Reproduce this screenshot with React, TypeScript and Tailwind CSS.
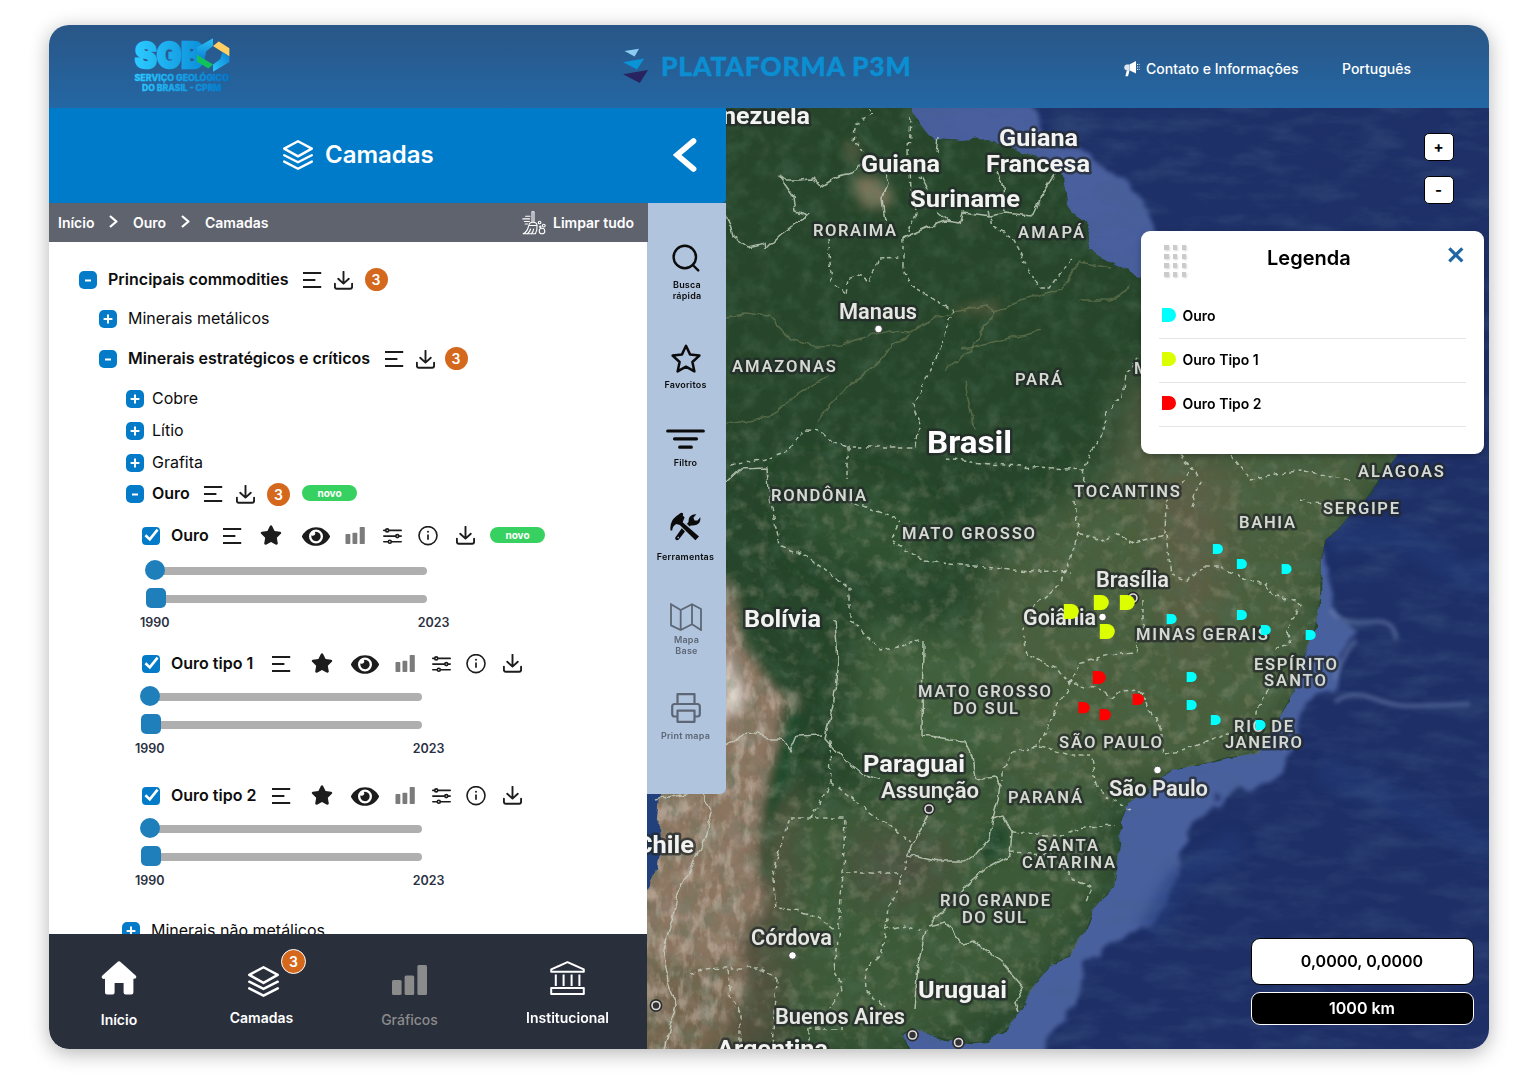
import React from "react";
import { FaEye, FaStar } from "react-icons/fa";

/* ---------- icons ---------- */

const LayersIcon = ({ className = "" }: { className?: string }) => (
  <svg viewBox="0 0 30 30" className={className} fill="none" stroke="currentColor" strokeWidth="2.4" strokeLinejoin="round" strokeLinecap="round">
    <path d="M15 1.2 28.8 8.6 15 16.4 1.2 8.6z" />
    <path d="M1.2 15.2 15 22.2 28.8 15.2" />
    <path d="M1.2 21.6 15 28.7 28.8 21.6" />
  </svg>
);

const MenuIcon = () => (
  <svg viewBox="0 0 19 17" className="h-[17px] w-[19px] shrink-0" stroke="#1c1c1c" strokeWidth="2">
    <path d="M0 1.1H18.2M0 8.1H12.4M0 15.1H18.2" />
  </svg>
);

const DownloadIcon = () => (
  <svg viewBox="0 0 19 19" className="h-[19px] w-[19px] shrink-0" fill="none" stroke="#1c1c1c" strokeWidth="1.9" strokeLinecap="round" strokeLinejoin="round">
    <path d="M9.5 .8V12.4M4.2 7.8 9.5 12.6 14.8 7.8" />
    <path d="M.9 12.6V15.8Q.9 17.8 2.8 17.8H16.2Q18.1 17.8 18.1 15.8V12.6" />
  </svg>
);

const BarsIcon = ({ className = "" }: { className?: string }) => (
  <svg viewBox="0 0 35 30" className={className} fill="currentColor">
    <rect x="0" y="15" width="9.6" height="15" rx="1.5" />
    <rect x="12.6" y="10.5" width="9.6" height="19.5" rx="1.5" />
    <rect x="25.4" y="0" width="9.6" height="30" rx="1.5" />
  </svg>
);

const SmallBars = ({ className = "" }: { className?: string }) => (
  <svg viewBox="0 0 20 17" className={className} fill="#7b7b7b">
    <rect x="0.5" y="7" width="4.8" height="10" rx=".7" />
    <rect x="7.5" y="5.8" width="4.8" height="11.2" rx=".7" />
    <rect x="14.7" y="0" width="5.1" height="17" rx=".7" />
  </svg>
);

const SlidersIcon = () => (
  <svg viewBox="0 0 19 17" className="h-[17px] w-[19px] shrink-0" fill="none" stroke="#1c1c1c" strokeWidth="1.6" strokeLinecap="round">
    <path d="M.8 2.4H2.6M6 2.4H18.2M.8 8.1H12.6M16 8.1H18.2M.8 13.8H5M8.6 13.8H18.2" />
    <circle cx="4.2" cy="2.4" r="1.5" />
    <circle cx="14.3" cy="8.1" r="1.5" />
    <circle cx="6.8" cy="13.8" r="1.5" />
  </svg>
);

const InfoIcon = () => (
  <svg viewBox="0 0 20 20" className="h-5 w-5 shrink-0" fill="none" stroke="#1c1c1c" strokeWidth="1.6">
    <circle cx="10" cy="9.6" r="9" />
    <path d="M10 8.4V13.8" strokeWidth="1.7" />
    <circle cx="10" cy="5.8" r="1" fill="#1c1c1c" stroke="none" />
  </svg>
);

const Crumb = () => (
  <svg viewBox="0 0 9 13" className="h-[13px] w-[9px] -translate-y-px" fill="none" stroke="#fff" strokeWidth="2.3" strokeLinejoin="round">
    <path d="M1 1 7.4 6.5 1 12" />
  </svg>
);

const BroomIcon = () => (
  <svg viewBox="0 0 24 24" className="h-6 w-6" fill="none" stroke="#fff" strokeWidth="1.1" strokeLinecap="round" strokeLinejoin="round">
    <path d="M10 .8V11M12 .8V11M10 .8H12" />
    <path d="M7 14.5Q7 11.3 11 11.3T15 14.5zM6.6 14.8Q5.6 20.5 1.2 22.8H13.4Q15.4 19 15 14.8" />
    <path d="M5.5 22.6Q8 20.5 8.6 18M9.6 22.6Q11.3 20.6 11.6 18" />
    <path d="M3.6 5.3H8M.8 7.9H7.6M2.4 10.5H7.4M3.2 13H5.6" />
    <circle cx="20" cy="20" r="2.8" />
    <circle cx="17.6" cy="11.5" r="1.3" />
    <circle cx="21.8" cy="14.6" r="1.4" />
    <circle cx="18.3" cy="15.8" r=".7" />
  </svg>
);

const Megaphone = () => (
  <svg viewBox="0 0 16 16" className="h-4 w-4" fill="#fff">
    <path d="M5.4 3.6 12 0V12.4L5.4 9.2z" />
    <path d="M2.4 3.6H5V9.2H2.4Q.2 8.8.2 6.4T2.4 3.6z" opacity=".85" />
    <path d="M2.8 9.2H5.6L4 15.2H1.4z" />
    <path d="M13 3.4H14M13 6H14M13 8.4H14M14.8 3.4H15.6M14.8 6H15.6M14.8 8.4H15.6" stroke="#fff" strokeWidth="1" />
  </svg>
);

const SearchIcon = () => (
  <svg viewBox="0 0 28 28" className="h-7 w-7" fill="none" stroke="#0b0b0b" strokeWidth="2.4" strokeLinecap="round">
    <circle cx="12.8" cy="13" r="11.2" />
    <path d="M20.8 21 26.2 26.4" />
  </svg>
);

const StarOutline = () => (
  <svg viewBox="0 0 30 29" className="h-[29px] w-[30px]" fill="none" stroke="#0b0b0b" strokeWidth="2.5" strokeLinejoin="round">
    <path d="M15 1.8 19 10.4 28.4 11.6 21.4 18 23.4 27.4 15 22.7 6.6 27.4 8.6 18 1.6 11.6 11 10.4z" />
  </svg>
);

const FilterIcon = () => (
  <svg viewBox="0 0 39 20" className="h-5 w-[39px]" stroke="#0b0b0b" strokeWidth="3.2" strokeLinecap="round">
    <path d="M1.7 2H37.3M8.5 9.8H30.5M13.7 18.2H25.3" />
  </svg>
);

const ToolsIcon = () => (
  <svg viewBox="0 0 31 29" className="h-[29px] w-[31px]" fill="#0b0b0b">
    <path d="M.6 18.5Q-.8 9.6 6.2 4.2L10.6 1Q12.4.2 13.2 1.8L12.8 3.6 14.6 5.4 12.6 10.2 29 24.6 25.4 28.2 9.8 13 6.2 12Q2.6 14 2.2 18.4z" />
    <path d="M16.6 11.4Q17.8 12 18.6 9.4 18.2 4 23.4 2.4L26.4 2.2 23.4 5.8 24.6 8.4 27.6 8.6 30.2 5.2Q31.2 10.6 26.6 12.8 23.4 14 20.8 13.4L19.6 14.4z" />
    <path d="M11.8 16.2 15 19.4 8.8 27.4Q6.8 29 5.4 27.2 4.6 25.6 6 24.4zM8.2 24.6 7.2 25.6 8.2 26.6 9.2 25.6z" />
  </svg>
);

const MapIcon = () => (
  <svg viewBox="0 0 32 28" className="h-7 w-8" fill="none" stroke="#5d6674" strokeWidth="1.8">
    <path d="M1 1.2 10.7 7 22 1.2 31 6V27L22 21.2 10.7 27 1 22.4zM10.7 7V27M22 1.2V21.2" />
  </svg>
);

const PrintIcon = () => (
  <svg viewBox="0 0 30 30" className="h-[30px] w-[30px]" fill="none" stroke="#5d6674" strokeWidth="2.2" strokeLinejoin="round">
    <path d="M6.5 11V1.2H23.5V11M6.5 23.5H3.6Q1.2 23.5 1.2 21V13.5Q1.2 11 3.8 11H26.2Q28.8 11 28.8 13.5V21Q28.8 23.5 26.4 23.5H23.5" />
    <path d="M6.5 17.6H23.5V28.8H6.5z" />
  </svg>
);

const HomeIcon = () => (
  <svg viewBox="0 0 36 34" className="h-[34px] w-9" fill="#fff">
    <path d="M16.2 1.2Q18 -.6 19.8 1.2L34.6 14.4Q35.8 15.8 35 17 34.4 18 32.4 17.8V31.4Q32.4 33.4 30.4 33.4H24.6Q22.6 33.4 22.6 31.4V22H13.6V31.4Q13.6 33.4 11.6 33.4H6Q4 33.4 4 31.4V17.8Q1.8 18.2 1 17 .2 15.8 1.4 14.4z" />
  </svg>
);

const BankIcon = () => (
  <svg viewBox="0 0 35 34" className="h-[34px] w-[35px]" fill="none" stroke="#fff" strokeWidth="2" strokeLinejoin="round">
    <path d="M17.5 1.2 33.8 8.4V10.8H1.2V8.4z" />
    <path d="M5.8 13.5V25M13.6 13.5V25M21.6 13.5V25M29.4 13.5V25" />
    <path d="M1.2 27H33.8V33H1.2z" />
  </svg>
);

const SgbLogo = () => (
  <svg viewBox="132 36 100 58" className="h-[58px] w-[100px] overflow-visible">
    <defs>
      <linearGradient id="sgbText" gradientUnits="userSpaceOnUse" x1="134" y1="0" x2="229" y2="0">
        <stop offset="0" stopColor="#2ccbff" />
        <stop offset="1" stopColor="#0078cc" />
      </linearGradient>
      <linearGradient id="hexBlue" x1="0" y1="0" x2="0" y2="1">
        <stop offset="0" stopColor="#2bc2f8" />
        <stop offset="1" stopColor="#0a80d2" />
      </linearGradient>
      <linearGradient id="hexBlueUp" x1="1" y1="0" x2="0" y2="1">
        <stop offset="0" stopColor="#0a7fd1" />
        <stop offset="1" stopColor="#2bc8fc" />
      </linearGradient>
    </defs>
    <text x="135" y="67.8" textLength="68" lengthAdjust="spacingAndGlyphs" fontFamily="Inter" fontWeight="900" fontSize="35.5" fill="url(#sgbText)" stroke="url(#sgbText)" strokeWidth="2.4">SGB</text>
    <path d="M213 38.2V46L206 51.6 204.6 59.6 197 54.8V47.6z" fill="url(#hexBlue)" />
    <path d="M218.8 41.6 229.4 48.2V56.6L213 46z" fill="#ffcf63" />
    <path d="M229.4 56.6V62L213 71.8V64.4L220.4 59 222.4 52z" fill="url(#hexBlueUp)" />
    <path d="M197 54.8 213 64.4 208.4 68.4 197 61.8z" fill="#12c05c" />
    <g fontFamily="Inter" fontWeight="800" fill="url(#sgbText)" stroke="url(#sgbText)" strokeWidth=".3">
      <text x="134.5" y="81.3" fontSize="8.6" textLength="94.5" lengthAdjust="spacingAndGlyphs">SERVIÇO GEOLÓGICO</text>
      <text x="142" y="90.7" fontSize="8.6" textLength="79.5" lengthAdjust="spacingAndGlyphs">DO BRASIL - CPRM</text>
    </g>
  </svg>
);

/* ---------- small building blocks ---------- */

const Toggle = ({ open = false }: { open?: boolean }) => (
  <span className="flex h-[18px] w-[18px] shrink-0 items-center justify-center rounded-[5px] bg-[#047bc8]">
    <svg viewBox="0 0 10 10" className="h-2.5 w-2.5" stroke="#fff" strokeWidth="2">
      {open ? <path d="M2 5.5H8" /> : <path d="M.6 5H9.4M5 .6V9.4" />}
    </svg>
  </span>
);

const Check = () => (
  <span className="flex h-[18px] w-[18px] shrink-0 items-center justify-center rounded-[4px] bg-[#047bc8]">
    <svg viewBox="0 0 18 18" className="h-[18px] w-[18px]" fill="none" stroke="#fff" strokeWidth="2.6">
      <path d="M3.4 8.2 7.8 12.4 15.6 2.6" />
    </svg>
  </span>
);

const Count = () => (
  <span className="flex h-[23px] w-[23px] shrink-0 items-center justify-center rounded-full bg-[#d4691e] text-[14px] font-semibold text-white">3</span>
);

const Novo = () => (
  <span className="mb-0.5 flex h-4 w-[55px] shrink-0 items-center justify-center rounded-full bg-[#36d160] text-[10px] font-bold text-white">novo</span>
);

const TreeRow = ({ pos, open, label, width, children }: { pos: string; open?: boolean; label: string; width: string; children?: React.ReactNode }) => (
  <div className={`flex h-6 shrink-0 items-center ${pos}`}>
    <Toggle open={open} />
    <span className={`shrink-0 whitespace-nowrap pb-0.5 text-[16px] leading-6 text-[#0d0d0d] ${open ? "font-semibold" : "font-normal"} ${width}`}>{label}</span>
    {children}
  </div>
);

const LayerRow = ({ pos, label, width, gaps, novo }: { pos: string; label: string; width: string; gaps: string[]; novo?: boolean }) => (
  <div className={`ml-[93px] flex h-6 shrink-0 items-center ${pos}`}>
    <Check />
    <span className={`ml-[11px] shrink-0 whitespace-nowrap pb-0.5 text-[16px] font-semibold leading-6 text-[#0d0d0d] ${width}`}>{label}</span>
    <MenuIcon />
    <FaStar className={`mb-0.5 h-5 w-[22px] shrink-0 text-[#1c1c1c] ${gaps[0]}`} />
    <FaEye className={`mt-px h-[25px] w-7 shrink-0 text-[#1c1c1c] ${gaps[1]}`} />
    <SmallBars className={`mb-px h-[17px] w-5 shrink-0 ${gaps[2]}`} />
    <span className={gaps[3]}><SlidersIcon /></span>
    <span className={gaps[4]}><InfoIcon /></span>
    <span className={`mb-px ${gaps[5]}`}><DownloadIcon /></span>
    {novo && <span className="ml-[15px]"><Novo /></span>}
  </div>
);

const Range = ({ pos }: { pos: string }) => (
  <div className={`shrink-0 ${pos}`}>
    <div className="flex h-5 items-center">
      <span className="z-10 h-5 w-5 rounded-full bg-[#1f7fbb]" />
      <span className="-ml-2 mt-px h-2 w-[270px] rounded-full bg-[#afafaf]" />
    </div>
    <div className="mt-2 flex h-5 items-center">
      <span className="z-10 ml-px h-5 w-5 rounded-[5px] bg-[#1f7fbb]" />
      <span className="-ml-2 mt-px h-2 w-[269px] rounded-full bg-[#afafaf]" />
    </div>
    <div className="-ml-[5px] mt-[7px] flex h-4 w-[309.5px] items-center justify-between text-[12.5px] font-semibold leading-4 text-[#2b3042]">
      <span>1990</span>
      <span>2023</span>
    </div>
  </div>
);

const RailItem = ({ pos, icon, label, muted }: { pos: string; icon: React.ReactNode; label: React.ReactNode; muted?: boolean }) => (
  <div className={`flex w-full flex-col items-center ${pos}`}>
    <div className="pr-0.5">{icon}</div>
    <span className={`text-center text-[9px] font-semibold leading-[11px] tracking-[0.22px] ${muted ? "text-[#5d6674]" : "text-[#0b0b0b]"}`}>{label}</span>
  </div>
);

/* ---------- satellite map ---------- */

const LAND =
  "M640 100H908L914 114 924 130 936 139 962 141 985 139 1003 145 1030 154 1053 165 1063 178 1068 205 1078 216 1087 223 1091 235 1088 248 1100 256 1120 268 1142 277 1200 290 1290 320 1370 370 1405 410 1397 456 1385 470 1365 500 1350 515 1337 530 1325 540 1321 560 1320 600 1314 632 1302 660 1294 690 1280 716 1268 738 1258 754 1228 757 1202 764 1172 770 1158 780 1146 792 1128 803 1121 820 1120 845 1117 868 1114 886 1094 908 1086 930 1070 955 1050 966 1036 983 1022 1008 1006 1030 988 1041 962 1043 935 1036 912 1028 902 1034 908 1049 910 1060H640z";

const ANDES = "M700 560 735 590 742 640 775 690 800 700 780 740 762 800 756 870 768 905 740 935 748 990 700 1060H640V560z";

const SOLID_BORDERS = [
  "M726 214 733 236 748 247 765 243 766 249 780 235 795 224 809 215 795 211 793 196 779 176 784 180 800 180 812 179 820 187 834 178 850 173 862 164",
  "M880 165 888 182 883 198 886 222M938 139 936 152M920 175 928 190M938 212 950 222M1055 175 1041 197 1036 210 1030 216 1005 213 990 216 963 212 960 223 945 221 928 227 903 238",
  "M997 172 1003 186 1005 212M726 482 740 469 767 468 770 500",
  "M835 620 838 660 834 700 825 738 845 760 865 775 882 780M726 745 750 732 772 738 782 738 790 752 797 736 822 735",
  "M923 640 922 736 950 740 965 741 972 755 975 780 995 777 1000 785 998 800 993 818 990 838 975 855 965 862 940 862 907 855 918 835 928 815",
  "M993 818 1003 815 1012 832 1010 855 987 868 966 886 945 910 928 926 945 922 963 945 975 942 1005 965 1023 986 1015 1002 1018 1012",
  "M926 930 918 965 914 1010",
  "M655 800 700 790 712 812 704 840 690 870 678 894 672 920 663 950 668 980 676 1005 664 1049",
];

const DASHED_BORDERS = [
  "M868 108 873 115 856 124 853 140 862 152M911 118 909 150 911 190 916 214 908 232",
  "M827 238 830 262 832 282 846 294 848 278 858 275 870 281 878 258 902 257M903 238 903 268 912 286 935 300 953 310 945 335 935 360 922 388 913 405 919 420 915 447 847 447 847 480",
  "M730 465 762 460 790 450 805 430 820 431 832 442 847 447M988 211 992 225 1014 240 1022 255 1028 270 1041 288 1050 288 1065 268 1072 258",
  "M945 459 990 464 1084 470 1091 450 1103 435 1107 412 1122 396 1125 375 1138 360",
  "M847 500 900 520 890 540 925 560 1010 570 1070 572",
  "M770 500 780 545 812 560 850 590 850 620 880 650 920 640",
  "M1075 500 1078 532 1070 562 1055 588 1035 605 1023 630 1027 655 1058 668 1070 684 1055 710 1040 744",
  "M1084 470 1080 500M1078 532 1100 541 1115 534 1135 544 1165 535 1166 502 1190 470",
  "M1166 535 1171 575 1186 580 1205 566 1220 566 1245 580 1265 585 1272 596 1293 600 1300 605 1287 632 1290 645 1275 650",
  "M1143 600 1143 624 1135 652 1118 653 1098 658 1080 664 1070 684 1103 690 1111 698 1118 692 1142 691 1150 712 1160 726 1163 754 1185 750 1222 736 1256 722 1258 705 1270 690",
  "M1038 746 1012 752 1003 768 1003 780M1040 746 1070 755 1090 755 1097 785 1110 800 1130 810M1012 832 1060 836 1085 827 1115 825",
  "M1010 853 1050 855 1075 880 1092 888 1085 904M830 740 831 783 810 818M831 783 870 812 910 842",
  "M778 855 790 818 845 818 843 873 837 950 835 970 842 990 830 1008M845 873 900 873M906 858 897 895 888 905 886 930 880 955 865 970 866 990 885 1008M886 930 905 925 922 930",
  "M778 855 773 880 776 908 800 911 822 920 835 930M690 972 720 968 760 968 776 978 772 1049M727 970 732 1000 740 1012 740 1049M808 1029H842M808 1029V1049",
  "M1180 455 1200 480 1190 510M1230 455 1250 480 1300 470 1350 480M1300 500 1350 510",
];

const RIVERS = [
  "M726 316 745 313 768 316 790 338 815 346 842 345 870 335 890 331 913 332 930 320 955 312 985 306 995 312 1020 300 1060 290 1080 262 1110 268",
  "M817 422 830 405 850 385 880 362 892 345 910 334M726 424 770 418 800 392 830 375M995 312 970 350 945 370",
  "M975 430 968 400 965 380M1042 330 1000 340 960 350M1080 300 1110 300 1130 288",
];

type Kind = "country" | "big" | "city" | "state";
type Label = { t: string; x: number; y: number; w: number; k: Kind };

const LABELS: Label[] = [
  { t: "nezuela", x: 722, y: 124, w: 88, k: "country" },
  { t: "Guiana", x: 861, y: 171.5, w: 79, k: "country" },
  { t: "Guiana", x: 999, y: 145.5, w: 79, k: "country" },
  { t: "Francesa", x: 986, y: 171.5, w: 104, k: "country" },
  { t: "Suriname", x: 910, y: 206.5, w: 110, k: "country" },
  { t: "RORAIMA", x: 813, y: 236, w: 83, k: "state" },
  { t: "AMAPÁ", x: 1018, y: 238, w: 66, k: "state" },
  { t: "Manaus", x: 839, y: 319, w: 78, k: "city" },
  { t: "AMAZONAS", x: 732, y: 372, w: 104, k: "state" },
  { t: "PARÁ", x: 1015, y: 385, w: 47, k: "state" },
  { t: "M", x: 1134, y: 374, w: 14, k: "state" },
  { t: "Brasil", x: 927, y: 452.5, w: 85, k: "big" },
  { t: "RONDÔNIA", x: 771, y: 501, w: 95, k: "state" },
  { t: "TOCANTINS", x: 1074, y: 497, w: 106, k: "state" },
  { t: "ALAGOAS", x: 1358, y: 477, w: 86, k: "state" },
  { t: "SERGIPE", x: 1323, y: 513.5, w: 76, k: "state" },
  { t: "BAHIA", x: 1239, y: 528, w: 56, k: "state" },
  { t: "MATO GROSSO", x: 902, y: 539, w: 133, k: "state" },
  { t: "Brasília", x: 1096, y: 587, w: 73, k: "city" },
  { t: "Goiânia", x: 1023, y: 625, w: 73, k: "city" },
  { t: "Bolívia", x: 744, y: 627, w: 77, k: "country" },
  { t: "MINAS GERAIS", x: 1136, y: 640, w: 132, k: "state" },
  { t: "ESPÍRITO", x: 1254, y: 669.5, w: 83, k: "state" },
  { t: "SANTO", x: 1264, y: 686, w: 62, k: "state" },
  { t: "MATO GROSSO", x: 918, y: 697, w: 133, k: "state" },
  { t: "DO SUL", x: 953, y: 713.5, w: 65, k: "state" },
  { t: "RIO DE", x: 1234, y: 732, w: 59, k: "state" },
  { t: "JANEIRO", x: 1225, y: 748, w: 77, k: "state" },
  { t: "SÃO PAULO", x: 1059, y: 748, w: 103, k: "state" },
  { t: "Paraguai", x: 863, y: 771.5, w: 102, k: "country" },
  { t: "Assunção", x: 881, y: 798, w: 98, k: "city" },
  { t: "PARANÁ", x: 1008, y: 803, w: 74, k: "state" },
  { t: "São Paulo", x: 1109, y: 796, w: 99, k: "city" },
  { t: "Chile", x: 636, y: 852.5, w: 58, k: "country" },
  { t: "SANTA", x: 1037, y: 851, w: 61, k: "state" },
  { t: "CATARINA", x: 1022, y: 867.5, w: 93, k: "state" },
  { t: "RIO GRANDE", x: 940, y: 906, w: 110, k: "state" },
  { t: "DO SUL", x: 962, y: 922.5, w: 64, k: "state" },
  { t: "Córdova", x: 751, y: 945, w: 81, k: "city" },
  { t: "Uruguai", x: 918, y: 998, w: 89, k: "country" },
  { t: "Buenos Aires", x: 775, y: 1023.5, w: 130, k: "city" },
  { t: "Argentina", x: 717, y: 1057, w: 111, k: "country" },
];

const FONT: Record<Kind, { size: number; weight: number; fill: string; adjust: "spacing" | "spacingAndGlyphs" }> = {
  country: { size: 24.5, weight: 700, fill: "#f3f3f1", adjust: "spacingAndGlyphs" },
  big: { size: 32, weight: 700, fill: "#ffffff", adjust: "spacingAndGlyphs" },
  city: { size: 21.5, weight: 600, fill: "#e6e6e2", adjust: "spacingAndGlyphs" },
  state: { size: 16.6, weight: 600, fill: "#d6d9d2", adjust: "spacing" },
};

const MARKERS: [number, number, number, string][] = [
  [1212.9, 544, 10, "#00ffff"],
  [1236.9, 559, 10, "#00ffff"],
  [1281.6, 564, 10, "#00ffff"],
  [1166.7, 614, 10, "#00ffff"],
  [1236.9, 610, 10, "#00ffff"],
  [1260.8, 625, 10, "#00ffff"],
  [1305.7, 630, 10, "#00ffff"],
  [1186.7, 672, 10, "#00ffff"],
  [1186.7, 700, 10, "#00ffff"],
  [1210.8, 715, 10, "#00ffff"],
  [1255.6, 720, 10, "#00ffff"],
  [1063.8, 604, 15, "#dcff00"],
  [1093.8, 595, 15, "#dcff00"],
  [1119.8, 595, 15, "#dcff00"],
  [1099.8, 624, 15, "#dcff00"],
  [1092.8, 671, 13, "#ff0000"],
  [1132.6, 693.7, 11.3, "#ff0000"],
  [1078.4, 702, 11.3, "#ff0000"],
  [1099.6, 709, 11.3, "#ff0000"],
];

const SatelliteMap = () => (
  <svg viewBox="647 108 842 941" className="block h-[941px] w-[842px]">
    <defs>
      <linearGradient id="ocean" x1="0" y1="0" x2="1" y2="1">
        <stop offset="0" stopColor="#1e3268" />
        <stop offset="1" stopColor="#1e2e66" />
      </linearGradient>
      <clipPath id="landClip"><path d={LAND} /></clipPath>
      <filter id="soft2" x="-20%" y="-20%" width="140%" height="140%"><feGaussianBlur stdDeviation="2" /></filter>
      <filter id="soft20" x="-50%" y="-50%" width="200%" height="200%"><feGaussianBlur stdDeviation="18" /></filter>
      <filter id="soft7" x="-30%" y="-30%" width="160%" height="160%"><feGaussianBlur stdDeviation="6" /></filter>
      <filter id="shelfEdge" x="-10%" y="-10%" width="120%" height="120%">
        <feTurbulence type="fractalNoise" baseFrequency="0.03" numOctaves="4" seed="11" />
        <feDisplacementMap in="SourceGraphic" scale="26" xChannelSelector="R" yChannelSelector="G" />
        <feGaussianBlur stdDeviation="2" />
      </filter>
      <filter id="edge"><feTurbulence type="fractalNoise" baseFrequency="0.06" numOctaves="3" seed="4" /><feDisplacementMap in="SourceGraphic" scale="9" xChannelSelector="R" yChannelSelector="G" /></filter>
      <filter id="borderSoft"><feTurbulence type="fractalNoise" baseFrequency="0.09" numOctaves="2" seed="9" /><feDisplacementMap in="SourceGraphic" scale="7" xChannelSelector="R" yChannelSelector="G" /><feGaussianBlur stdDeviation="0.4" /></filter>
      <filter id="darkNoise" x="0" y="0" width="100%" height="100%">
        <feTurbulence type="fractalNoise" baseFrequency="0.05" numOctaves="5" seed="7" />
        <feColorMatrix values="0 0 0 0 0.08  0 0 0 0 0.18  0 0 0 0 0.11  2.2 0 0 0 -0.95" />
      </filter>
      <filter id="lightNoise" x="0" y="0" width="100%" height="100%">
        <feTurbulence type="fractalNoise" baseFrequency="0.07" numOctaves="5" seed="21" />
        <feColorMatrix values="0 0 0 0 0.58  0 0 0 0 0.52  0 0 0 0 0.4  0 1.9 0 0 -0.92" />
      </filter>
      <filter id="seaNoise" x="0" y="0" width="100%" height="100%">
        <feTurbulence type="fractalNoise" baseFrequency="0.02 0.06" numOctaves="5" seed="3" />
        <feColorMatrix values="0 0 0 0 0.06  0 0 0 0 0.12  0 0 0 0 0.26  1.8 0 0 0 -0.75" />
      </filter>
      <filter id="ridgeNoise" x="0" y="0" width="100%" height="100%">
        <feTurbulence type="fractalNoise" baseFrequency="0.09 0.045" numOctaves="5" seed="5" />
        <feColorMatrix values="0 0 0 0 0.85  0 0 0 0 0.74  0 0 0 0 0.66  4 0 0 0 -1.9" />
      </filter>
      <filter id="ridgeShade" x="0" y="0" width="100%" height="100%">
        <feTurbulence type="fractalNoise" baseFrequency="0.07 0.04" numOctaves="5" seed="15" />
        <feColorMatrix values="0 0 0 0 0.3  0 0 0 0 0.24  0 0 0 0 0.2  4 0 0 0 -1.9" />
      </filter>
      <mask id="andesMask" maskUnits="userSpaceOnUse" x="640" y="540" width="200" height="520">
        <path d={ANDES} fill="#fff" filter="url(#soft7)" />
      </mask>
      <linearGradient id="fadeSouth" gradientUnits="userSpaceOnUse" x1="0" y1="400" x2="0" y2="520">
        <stop offset="0" stopColor="#000" />
        <stop offset="1" stopColor="#fff" />
      </linearGradient>
      <mask id="southMask" maskUnits="userSpaceOnUse" x="640" y="100" width="860" height="960">
        <rect x="640" y="100" width="860" height="960" fill="url(#fadeSouth)" />
      </mask>
    </defs>

    {/* ocean and continental shelf */}
    <rect x="640" y="100" width="860" height="960" fill="url(#ocean)" />
    <g filter="url(#shelfEdge)">
      <path d="M890 90H1030L1040 130 1062 152 1090 152 1108 172 1136 190 1160 235 1160 300 1050 260 900 150z" fill="#4a5f9e" />
      <path d="M1318 530 1324 560 1332 600 1356 636 1340 668 1331 690 1310 705 1294 740 1274 782 1240 792 1200 815 1184 850 1170 900 1150 928 1112 936 1088 968 1078 1005 1056 1030 1040 1060H890V1000L1110 780 1260 700z" fill="#4a609f" />
    </g>
    <path d="M1330 610Q1345 626 1370 622T1396 640M1335 680Q1345 650 1356 640M1335 702Q1350 690 1372 698T1408 706 1470 704" fill="none" stroke="#7f93bf" strokeWidth="4" opacity=".5" filter="url(#soft2)" />
    <path d="M1330 545Q1390 520 1440 560T1489 560M1320 770Q1400 800 1489 850M1150 930 1180 880 1240 840" fill="none" stroke="#243a78" strokeWidth="26" opacity=".55" filter="url(#soft7)" />
    <rect x="640" y="100" width="860" height="960" filter="url(#seaNoise)" opacity=".4" />

    {/* land */}
    <g filter="url(#edge)">
      <path d={LAND} fill="#264529" />
    </g>
    <g clipPath="url(#landClip)">
      <g filter="url(#soft20)">
        <path d="M1110 470 1180 440 1420 430 1330 560 1300 700 1240 770 1120 790 1000 780 960 700 990 560 1060 500z" fill="#485f3e" />
        <path d="M1140 460 1230 470 1220 600 1190 680 1160 560z" fill="#5d5f44" />
        <path d="M1130 380 1160 370 1160 480 1110 480z" fill="#566045" />
        <path d="M860 620 1000 640 1000 760 900 800 850 720z" fill="#3f5f3b" />
        <path d="M790 800 1100 780 1110 880 1040 980 940 1040 800 1050 780 900z" fill="#3c5a39" />
        <path d="M850 830 960 840 930 900 860 900z" fill="#4d5340" />
        <path d="M790 470 900 500 960 560 880 580 800 540z" fill="#335233" />
        <path d="M640 790 790 780 780 1060H640z" fill="#57533f" />
      </g>
      <g filter="url(#soft7)">
        <path d={ANDES} fill="#8b7461" />
        <path d="M726 650 742 690 738 715 726 710z" fill="#e4ddd5" />
        <path d="M785 690 800 720 790 770 768 830 765 890 757 870 762 800 775 750z" fill="#1f4a2b" />
        <path d="M995 825 1008 830 1003 855 975 862z" fill="#1c4529" />
        <path d="M850 180Q870 170 885 185T888 205 862 206z" fill="#857b60" opacity=".9" />
        <path d="M844 140 860 145 858 165 846 158zM965 220 974 224 966 235z" fill="#6a6a4e" opacity=".7" />
        <path d="M950 308 1000 300 1000 314 960 314z" fill="#66613f" opacity=".6" />
        <path d="M640 960 740 960 735 1060H640z" fill="#6d6149" opacity=".7" />
      </g>
      <g mask="url(#andesMask)">
        <rect x="640" y="540" width="200" height="520" filter="url(#ridgeShade)" opacity=".4" />
        <rect x="640" y="540" width="200" height="520" filter="url(#ridgeNoise)" opacity=".35" />
      </g>
      <rect x="640" y="100" width="860" height="960" filter="url(#darkNoise)" opacity=".36" />
      <g mask="url(#southMask)">
        <rect x="640" y="100" width="860" height="960" filter="url(#lightNoise)" opacity=".28" />
      </g>
      <rect x="640" y="100" width="860" height="960" filter="url(#lightNoise)" opacity=".09" />
    </g>
    <path d="M640 780H662L658 830 660 850 652 880 640 900z" fill="#20407c" filter="url(#edge)" />

    {/* rivers and borders */}
    <g fill="none" filter="url(#borderSoft)" strokeLinejoin="round">
      {RIVERS.map((d) => <path key={d} d={d} stroke="#7f8a62" strokeWidth="1.6" opacity=".5" />)}
      {SOLID_BORDERS.map((d) => <path key={d} d={d} stroke="#c9d3c3" strokeWidth="1.5" opacity=".8" />)}
      {DASHED_BORDERS.map((d) => <path key={d} d={d} stroke="#c9d3c3" strokeWidth="1.5" strokeDasharray="4.5 3.5" opacity=".8" />)}
    </g>

    {/* cities */}
    {[[878.5, 329], [1102.5, 617], [1157.5, 770], [792.5, 955.5]].map(([x, y]) => (
      <circle key={x} cx={x} cy={y} r="3.8" fill="#fff" stroke="#333" strokeWidth=".8" />
    ))}
    {[[929, 809], [1133, 598], [912.5, 1035], [958.5, 1042.5], [656, 1005.5]].map(([x, y]) => (
      <g key={x}>
        <circle cx={x} cy={y} r="4.6" fill="none" stroke="#2b2b2b" strokeWidth="3.6" />
        <circle cx={x} cy={y} r="4" fill="#333" stroke="#ddd" strokeWidth="1.6" />
      </g>
    ))}

    {/* place names with a dark halo */}
    <g fontFamily="Roboto" strokeLinejoin="round" paintOrder="stroke" stroke="#23282a" strokeWidth="5" strokeOpacity=".72">
      {LABELS.map((l) => (
        <text
          key={l.t + l.x}
          x={l.x}
          y={l.y}
          textLength={l.w}
          lengthAdjust={FONT[l.k].adjust}
          fontSize={FONT[l.k].size}
          fontWeight={FONT[l.k].weight}
          fill={FONT[l.k].fill}
        >
          {l.t}
        </text>
      ))}
    </g>

    {MARKERS.map(([x, y, s, c]) => (
      <path key={`${x}-${y}`} transform={`translate(${x} ${y}) scale(${s / 10})`} d="M0 0H5a5 5 0 0 1 0 10H0z" fill={c} />
    ))}
  </svg>
);

/* ---------- floating map controls ---------- */

const LegendItem = ({ color, label }: { color: string; label: string }) => (
  <div className="flex h-11 items-center border-b-[1.5px] border-[#e4e4e4] pb-0.5 pl-[2.5px]">
    <span className={`h-[14.5px] w-[14px] rounded-r-full ${color}`} />
    <span className="ml-[7px] text-[14px] font-semibold text-black">{label}</span>
  </div>
);

const Legend = () => (
  <div className="absolute left-[1092px] top-[123px] h-[223px] w-[343px] rounded-[9px] bg-white pl-[18px] pr-[18px] shadow-[0_2px_6px_rgba(0,0,0,0.25)]">
    <div className="flex h-[63.5px] pt-3.5">
      <div className="ml-[5px] grid h-8 w-[22px] grid-cols-[repeat(3,4.5px)] content-between justify-between">
        {Array.from({ length: 12 }, (_, i) => (
          <span key={i} className="h-[4.5px] w-[4.5px] bg-[#cbcbcb] shadow-[1px_1px_2px_rgba(0,0,0,0.15)]" />
        ))}
      </div>
      <span className="ml-[81px] w-[83px] whitespace-nowrap text-[20px] font-semibold leading-[26px] text-black">Legenda</span>
      <svg viewBox="0 0 16 16" className="ml-[97.5px] mt-[2px] h-4 w-4" stroke="#1f66a5" strokeWidth="3.2">
        <path d="M1.3 1.3 14.3 14.3M14.3 1.3 1.3 14.3" />
      </svg>
    </div>
    <LegendItem color="bg-[#00ffff]" label="Ouro" />
    <LegendItem color="bg-[#dcff00]" label="Ouro Tipo 1" />
    <LegendItem color="bg-[#ff0000]" label="Ouro Tipo 2" />
  </div>
);

/* ---------- page ---------- */

export default function App() {
  return (
    <div className="h-[1086px] w-[1513px] overflow-hidden bg-white pl-[49px] pt-[25px] font-['Inter',sans-serif]">
      <div className="h-[1024px] w-[1440px] rounded-[20px] shadow-[0_4px_20px_rgba(0,0,0,0.3)]">
        <div className="flex h-full w-full flex-col overflow-hidden rounded-[20px]">
          <header className="flex h-[83px] shrink-0 items-center bg-linear-to-b from-[#295687] to-[#2367a4]">
            <div className="ml-[83px] pb-[3px]"><SgbLogo /></div>
            <svg viewBox="0 0 26 36" className="ml-[390.5px] h-9 w-[26px] -translate-y-px">
              <path d="M1.5 3 16 .8 11.6 8.4z" fill="#8ccdf2" />
              <path d="M0 14.2 21.2 10.6 14 21.6z" fill="#0a93d6" />
              <path d="M0 26.2 25 22 16.8 35z" fill="#29235f" />
            </svg>
            <span className="ml-[12.5px] w-[463px] -translate-y-px whitespace-nowrap font-['Lato'] text-[26.5px] font-black leading-8 tracking-[0.75px] text-[#0b8fd2] [-webkit-text-stroke:0.4px_#0b8fd2]">PLATAFORMA P3M</span>
            <div className="flex items-center pb-0 pt-[5px]">
              <Megaphone />
              <span className="ml-1.5 w-[196px] text-[14px] font-medium leading-5 text-white">Contato e Informações</span>
              <span className="text-[14px] font-medium leading-5 text-white">Português</span>
            </div>
          </header>

          <div className="relative flex h-[941px] flex-col">
            <div className="absolute left-[598px] top-0"><SatelliteMap /></div>

            <div className="z-10 flex h-[95px] w-[677px] shrink-0 items-center rounded-br-[4px] bg-[#007bc9] pb-px">
              <LayersIcon className="ml-[234px] h-[30px] w-[30px] text-white" />
              <h1 className="ml-3 w-[348px] text-[24px] font-semibold leading-8 text-white">Camadas</h1>
              <svg viewBox="0 0 24 34" className="h-[34px] w-6" fill="none" stroke="#fff" strokeWidth="5.6" strokeLinecap="round" strokeLinejoin="miter">
                <path d="M20.6 3 4 17 20.6 31" />
              </svg>
            </div>

            <div className="z-10 flex h-[846px]">
              <div className="flex w-[598px] shrink-0 flex-col bg-white">
                <nav className="z-10 flex h-[39px] w-[599px] shrink-0 items-center bg-[#5f636e] pl-[9px] text-[14px] font-semibold leading-5 text-white">
                  <span className="w-[51px]">Início</span>
                  <Crumb />
                  <span className="ml-[15px] w-[48px]">Ouro</span>
                  <Crumb />
                  <span className="ml-[15px] w-[317px]">Camadas</span>
                  <BroomIcon />
                  <span className="ml-[7px] whitespace-nowrap">Limpar tudo</span>
                </nav>

                <div className="flex h-[692px] shrink-0 flex-col overflow-hidden pt-[26px]">
                  <TreeRow pos="ml-[30px]" open label="Principais commodities" width="ml-[11px] w-[194.5px]">
                    <MenuIcon />
                    <span className="ml-3"><DownloadIcon /></span>
                    <span className="mb-px ml-[12px]"><Count /></span>
                  </TreeRow>
                  <TreeRow pos="ml-[50px] mt-[15px]" label="Minerais metálicos" width="ml-[11px]" />
                  <TreeRow pos="ml-[50px] mt-4" open label="Minerais estratégicos e críticos" width="ml-[11px] w-[256.5px]">
                    <MenuIcon />
                    <span className="ml-3"><DownloadIcon /></span>
                    <span className="mb-px ml-[10px]"><Count /></span>
                  </TreeRow>
                  <TreeRow pos="ml-[77px] mt-4" label="Cobre" width="ml-2" />
                  <TreeRow pos="ml-[77px] mt-2" label="Lítio" width="ml-2" />
                  <TreeRow pos="ml-[77px] mt-2" label="Grafita" width="ml-2" />
                  <TreeRow pos="ml-[77px] mt-[7px]" open label="Ouro" width="ml-2 w-[51.5px]">
                    <MenuIcon />
                    <span className="ml-[13.5px]"><DownloadIcon /></span>
                    <span className="ml-[12px]"><Count /></span>
                    <span className="ml-3"><Novo /></span>
                  </TreeRow>

                  <LayerRow
                    pos="mt-[18px]"
                    label="Ouro"
                    width="w-[52px]"
                    gaps={["ml-[18px]", "ml-[20px]", "ml-[15px]", "ml-[18px]", "ml-[16px]", "ml-[18px]"]}
                    novo
                  />
                  <Range pos="mt-3 ml-[96px]" />

                  <LayerRow
                    pos="mt-[21px]"
                    label="Ouro tipo 1"
                    width="w-[100.5px]"
                    gaps={["ml-[20.5px]", "ml-[18px]", "ml-[16px]", "ml-[17px]", "ml-[15px]", "ml-[17px]"]}
                  />
                  <Range pos="mt-[10px] ml-[91px]" />

                  <LayerRow
                    pos="mt-[27px]"
                    label="Ouro tipo 2"
                    width="w-[100.5px]"
                    gaps={["ml-[20.5px]", "ml-[18px]", "ml-[16px]", "ml-[17px]", "ml-[15px]", "ml-[17px]"]}
                  />
                  <Range pos="mt-[10px] ml-[91px]" />

                  <TreeRow pos="ml-[73px] mt-[30px]" label="Minerais não metálicos" width="ml-[11px]" />
                </div>

                <nav className="flex h-[115px] shrink-0 rounded-bl-[20px] bg-[#2a2f3c] text-[14px] font-semibold leading-5 text-white">
                  <div className="ml-[20px] flex w-[100px] flex-col items-center pt-[27px]">
                    <HomeIcon />
                    <span className="mt-[15px]">Início</span>
                  </div>
                  <div className="relative ml-[42px] flex w-[101px] flex-col items-center pt-[32px]">
                    <LayersIcon className="ml-1 h-[31px] w-[33px] text-white" />
                    <span className="mt-[11px]">Camadas</span>
                    <span className="absolute left-[70px] top-[15px] flex h-[25px] w-[25px] items-center justify-center rounded-full border border-white bg-[#d4691e] text-[14px]">3</span>
                  </div>
                  <div className="ml-[47px] flex w-[101px] flex-col items-center pt-[31px] text-[#8b8b8b]">
                    <BarsIcon className="h-[30px] w-[35px]" />
                    <span className="mt-[15px] font-medium">Gráficos</span>
                  </div>
                  <div className="ml-[57px] flex w-[101px] flex-col items-center pt-[27px]">
                    <BankIcon />
                    <span className="mt-[13px]">Institucional</span>
                  </div>
                </nav>
              </div>

              <aside className="flex h-[591px] w-[79px] flex-col items-center rounded-br-[6px] bg-[#b0c4de]">
                <RailItem pos="mt-[41px]" icon={<SearchIcon />} label={<span className="mt-[7px] block pl-px">Busca<br />rápida</span>} />
                <RailItem pos="mt-[43px]" icon={<StarOutline />} label={<span className="mt-[5.5px] block pr-0.5">Favoritos</span>} />
                <RailItem pos="mt-[39.5px]" icon={<FilterIcon />} label={<span className="mt-[8px] block pr-0.5">Filtro</span>} />
                <RailItem pos="mt-[44px]" icon={<ToolsIcon />} label={<span className="mt-[10px] block pr-0.5">Ferramentas</span>} />
                <RailItem pos="mt-[41px]" icon={<MapIcon />} label={<span className="mt-[3px] block">Mapa<br />Base</span>} muted />
                <RailItem pos="mt-[37px]" icon={<PrintIcon />} label={<span className="mt-[7px] block pr-0.5">Print mapa</span>} muted />
              </aside>
            </div>

            <button className="absolute left-[1374.5px] top-[25px] flex h-7 w-[30px] items-center justify-center rounded-[5px] border border-black bg-white text-[15px] font-bold text-black">+</button>
            <button className="absolute left-[1374.5px] top-[68px] flex h-7 w-[30px] items-center justify-center rounded-[5px] border border-black bg-white text-[15px] font-bold text-black">-</button>
            <Legend />
            <div className="absolute left-[1202px] top-[830px] flex w-[223px] flex-col gap-[7px] text-[16px] font-semibold">
              <div className="flex h-[47px] items-center justify-center rounded-[9px] border border-black bg-white pb-0.5 pr-px text-black">0,0000, 0,0000</div>
              <div className="flex h-[33px] items-center justify-center rounded-[9px] border border-white bg-black pb-0.5 pr-px text-white">1000 km</div>
            </div>
          </div>
        </div>
      </div>
    </div>
  );
}
